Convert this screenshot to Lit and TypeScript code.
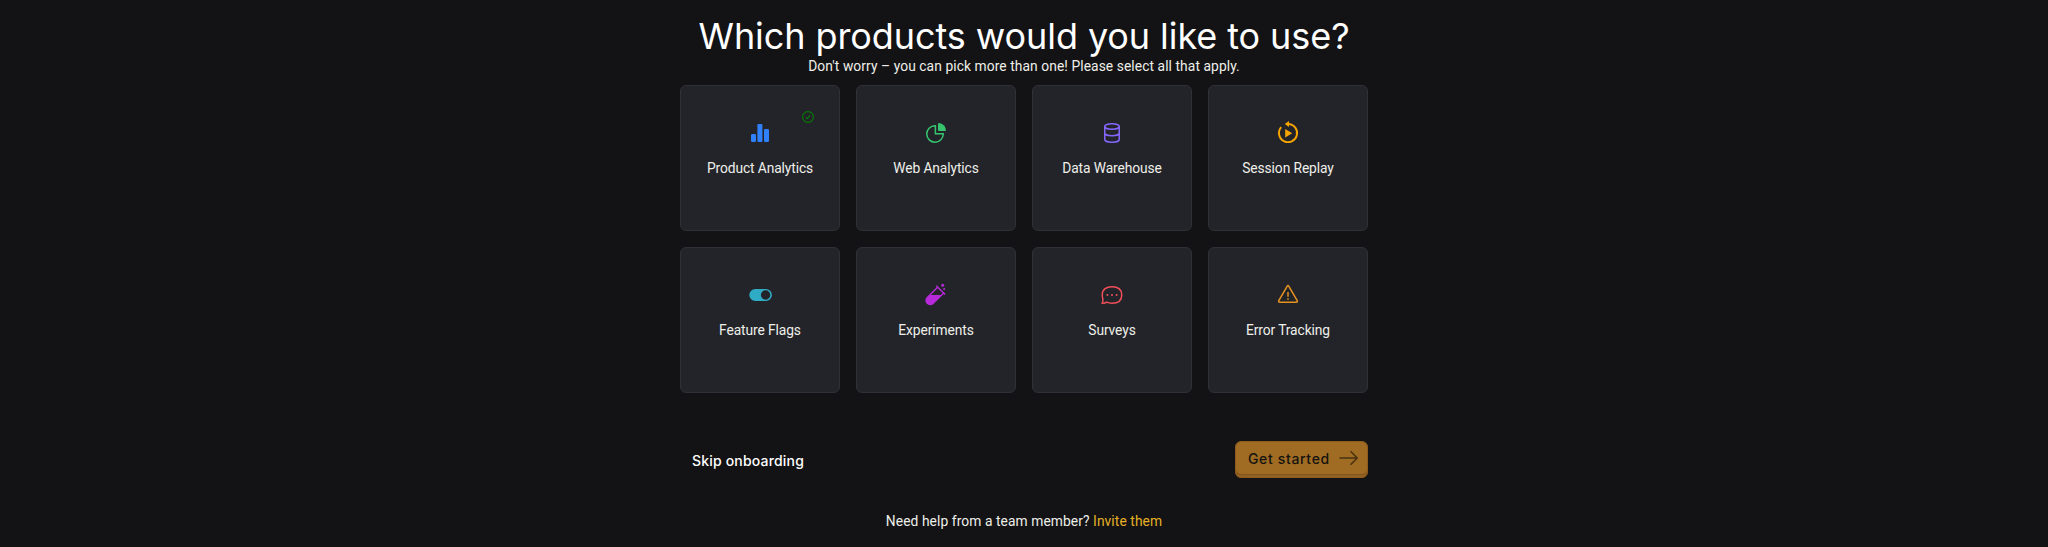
import { LitElement, html, svg, css } from "lit";
import { customElement } from "lit/decorators.js";

interface Product { name: string; color: string; icon: unknown; selected?: boolean; }

const products: Product[] = [
  { name: "Product Analytics", color: "#2f80fa", selected: true, icon: svg`
    <g fill="currentColor"><rect x="3" y="13" width="5" height="8" rx="1.2"/><rect x="9.4" y="3" width="5" height="18" rx="1.2"/><rect x="16" y="8" width="5" height="13" rx="1.2"/></g>` },
  { name: "Web Analytics", color: "#36c46f", icon: svg`
    <path d="M11.4 4.75H10.9A8.25 8.25 0 1 0 19.25 13V12.7H11.4Z"/>
    <path fill="currentColor" stroke="none" d="M14 3Q14 2 15 2A7.6 7.6 0 0 1 22 9Q22 10 21 10H15Q14 10 14 9Z"/>` },
  { name: "Data Warehouse", color: "#8567ff", icon: svg`
    <ellipse cx="12" cy="5.5" rx="7.25" ry="2.75"/><path d="M4.75 5.5V18.5C4.75 20 8 21.25 12 21.25S19.25 20 19.25 18.5V5.5M4.75 12C4.75 13.5 8 14.75 12 14.75S19.25 13.5 19.25 12"/>` },
  { name: "Session Replay", color: "#f7a501", icon: svg`
    <path stroke-width="1.9" d="M12 3A9.05 9.05 0 1 1 5.2 6.1"/><path fill="currentColor" stroke="none" d="M8.8 2.9L13 0V6ZM9.2 8V16.6L16.2 12.3Z"/>` },
  { name: "Feature Flags", color: "#30abc6", icon: svg`
    <path fill="currentColor" stroke="none" fill-rule="evenodd" d="M7.3 6H17.9A6 6 0 0 1 17.9 18H7.3A6 6 0 0 1 7.3 6ZM17.6 7.3A4.7 4.7 0 1 0 17.6 16.7A4.7 4.7 0 0 0 17.6 7.3Z"/>` },
  { name: "Experiments", color: "#b62ad9", icon: svg`
    <path stroke-width="1.4" d="M12.2 2.7L21.2 11.6M13.6 4.2L3.3 14.6A4 4 0 0 0 9 20.4L19.7 10"/>
    <path fill="currentColor" stroke="none" d="M6.2 12H17.6L9.2 20.6A4.2 4.2 0 0 1 3 14.8Z"/>
    <circle cx="18.7" cy="2.3" r="1.5" fill="currentColor" stroke="none"/><circle cx="20.2" cy="6" r="1" fill="currentColor" stroke="none"/>` },
  { name: "Surveys", color: "#f04f58", icon: svg`
    <path d="M12 3.75C17.5 3.75 21.75 6.2 21.75 12S17.5 20.25 12 20.25C9.6 20.25 8 20 6.6 19.2C5.3 20.2 3.8 20.5 2.2 20.25C3 18.8 3.2 17.5 2.8 15.7C2.4 14.5 2.25 13.3 2.25 12C2.25 6.2 6.5 3.75 12 3.75Z"/>
    <g fill="currentColor" stroke="none"><circle cx="7.4" cy="12" r="1"/><circle cx="12" cy="12" r="1"/><circle cx="16.6" cy="12" r="1"/></g>` },
  { name: "Error Tracking", color: "#e6921e", icon: svg`
    <path d="M11.1 3.3Q12 1.9 12.9 3.3L21.2 17.7Q21.8 19.2 20.3 19.25H3.7Q2.2 19.2 2.8 17.7Z"/><path d="M12 9V13.7M12 15.2V16.8"/>` },
];

@customElement("product-card")
class ProductCard extends LitElement {
  static properties = { product: { attribute: false } };
  declare product: Product;
  static styles = css`
    :host { display: flex; flex-direction: column; align-items: center; position: relative; box-sizing: border-box;
      height: 146px; padding-top: 35px; border: 1px solid #303038; border-radius: 6px; background: #232429; }
    .icon { width: 24px; height: 24px; overflow: visible; fill: none; stroke: currentColor; stroke-width: 1.5; }
    .icon rect { stroke: none; }
    .name { margin-top: 13px; font-size: 13.8px; line-height: 20px; letter-spacing: -0.1px; white-space: nowrap; color: #eeefe9; }
    .check { position: absolute; top: 25px; right: 25px; width: 12px; height: 12px; color: #067a06; fill: none; stroke: currentColor; stroke-width: 1.15; }
  `;
  render() {
    const p = this.product;
    return html`
      ${p.selected ? html`<svg class="check" viewBox="0 0 12 12"><circle cx="6" cy="6" r="5.4"/><path d="M3.9 6.3L5.4 7.6L8.1 4.3"/></svg>` : null}
      <svg class="icon" viewBox="0 0 24 24" style="color:${p.color}">${p.icon}</svg>
      <div class="name">${p.name}</div>`;
  }
}

@customElement("app-root")
class AppRoot extends LitElement {
  static styles = css`
    :host { display: block; box-sizing: border-box; height: 547px; overflow: hidden; background: #131315; color: #eeefe9;
      font-family: Roboto, "Liberation Sans", sans-serif; font-size: 13.8px; }
    .page { width: 688px; margin: 0 auto; padding-top: 14px; display: flex; flex-direction: column; }
    h1 { margin: 0; text-align: center; font: 400 36px/44px Inter, sans-serif; letter-spacing: -0.08px; color: #fff; white-space: nowrap; }
    p { margin: 0; text-align: center; line-height: 20px; letter-spacing: 0.08px; }
    .intro { margin-top: -2px; }
    .grid { margin-top: 9px; display: grid; grid-template-columns: repeat(4, 160px); gap: 16px; }
    .actions { margin-top: 48px; height: 37px; display: flex; justify-content: space-between; }
    button { font: 500 14px/20px Inter, sans-serif; border: 0; margin: 0; background: none; white-space: nowrap; }
    .skip { padding: 2px 12px 0; color: #fff; letter-spacing: 0.18px; }
    .start { box-sizing: border-box; width: 133px; padding: 0 9px 1px 12px; display: flex; align-items: center; justify-content: space-between;
      border: 1px solid #8e5b1b; border-radius: 6px; background: #a06c23; color: #15130f; letter-spacing: 0.65px;
      box-shadow: inset 0 -2px #926126, inset 0 -3px #84531a; }
    .arrow { width: 19px; height: 16px; margin-bottom: 2px; fill: none; stroke: #46300f; stroke-width: 1.4; }
    .help { margin-top: 33px; }
    a { color: #e5b025; }
  `;
  render() {
    return html`
      <div class="page">
        <h1>Which products would you like to use?</h1>
        <p class="intro">Don't worry – you can pick more than one! Please select all that apply.</p>
        <div class="grid">${products.map((p) => html`<product-card .product=${p}></product-card>`)}</div>
        <div class="actions">
          <button class="skip">Skip onboarding</button>
          <button class="start">Get started<svg class="arrow" viewBox="0 0 19 16"><path d="M.5 8H18M11.5 1.3L18.2 8L11.5 14.7"/></svg></button>
        </div>
        <p class="help">Need help from a team member? <a>Invite them</a></p>
      </div>`;
  }
}
